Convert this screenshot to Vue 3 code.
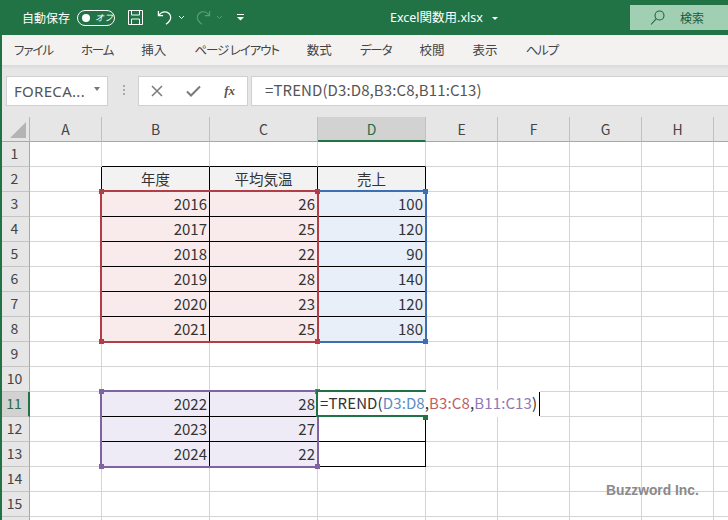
<script setup>
const tabs = ['ファイル', 'ホーム', '挿入', 'ページ レイアウト', '数式', 'データ', '校閲', '表示', 'ヘルプ']
const columns = ['A', 'B', 'C', 'D', 'E', 'F', 'G', 'H', 'I']
const rowNumbers = Array.from({ length: 16 }, (_, i) => i + 1)

const values = {
  2: ['年度', '平均気温', '売上'],
  3: [2016, 26, 100],
  4: [2017, 25, 120],
  5: [2018, 22, 90],
  6: [2019, 28, 140],
  7: [2020, 23, 120],
  8: [2021, 25, 180],
  11: [2022, 28, ''],
  12: [2023, 27, ''],
  13: [2024, 22, ''],
}

const inTable = (row) => (row >= 2 && row <= 8) || (row >= 11 && row <= 13)

const isKana = (tab) => /[ァ-ヶー]/.test(tab)

const cellText = (row, col) => {
  const line = values[row]
  return line && col >= 1 && col <= 3 ? line[col - 1] : ''
}

const cellClass = (row, col) => {
  const body = col >= 1 && col <= 3
  return {
    head: row === 2 && body,
    pink: row >= 3 && row <= 8 && col <= 2 && col >= 1,
    blue: row >= 3 && row <= 8 && col === 3,
    lilac: row >= 11 && row <= 13 && col <= 2 && col >= 1,
    'line-b': body && ((row >= 1 && row <= 8) || (row >= 10 && row <= 13)),
    'line-r': col <= 3 && inTable(row),
  }
}
</script>

<template>
  <div class="window">
    <header class="titlebar">
      <div class="quick">
        <span class="autosave">自動保存</span>
        <span class="toggle"><i class="knob"></i><em>オフ</em></span>
        <svg class="save" width="17" height="17" viewBox="0 0 17 17" fill="none" stroke="#fff" stroke-width="1">
          <path d="M1.500 1.500h14v14h-14z" />
          <path d="M4.500 1.500v4.500h8v-4.500M4.500 15.500v-5.500h8v5.500" />
        </svg>
        <svg class="undo" width="16" height="17" viewBox="0 0 17 17" fill="none" stroke="#fff" stroke-width="1.300">
          <path d="M1.500 1.500v5h5" />
          <path d="M1.800 6.300C4 3.200 7.300 1.800 10.500 2.800c3.800 1.300 5 5.500 3.300 8.500c-.8 1.500-2.200 3-4.300 4.500" />
        </svg>
        <svg class="caret" width="7" height="5" viewBox="0 0 7 5" fill="none" stroke="#fff" stroke-width="1"><path d="M1 1l2.500 2.500L6 1" /></svg>
        <svg class="redo" width="16" height="17" viewBox="0 0 17 17" fill="none" stroke="#5d9a78" stroke-width="1.200">
          <path d="M15.500 1.500v5h-5" />
          <path d="M15.200 6.300C13 3.200 9.700 1.800 6.500 2.800c-3.800 1.300-5 5.500-3.300 8.500c.8 1.500 2.200 3 4.300 4.500" />
        </svg>
        <svg class="caret dim" width="7" height="5" viewBox="0 0 7 5" fill="none" stroke="#5d9a78" stroke-width="1"><path d="M1 1l2.500 2.500L6 1" /></svg>
        <svg class="more" width="8" height="7" viewBox="0 0 8 7" fill="#fff"><path d="M0 0h7v1H0zM0 3h7L3.500 6.500z" /></svg>
      </div>
      <div class="doc">Excel関数用.xlsx<i class="doc-caret"></i></div>
      <div class="search">
        <svg width="15" height="16" viewBox="0 0 15 16" fill="none" stroke="#24643f" stroke-width="1.100">
          <circle cx="9.500" cy="5.500" r="4.500" />
          <path d="M6.200 8.800L1 14.500" />
        </svg>
        <span>検索</span>
      </div>
    </header>

    <nav class="tabs">
      <span v-for="tab in tabs" :key="tab" :class="{ kana: isKana(tab) }">{{ tab }}</span>
    </nav>

    <div class="formula-row">
      <div class="namebox">
        <span>FORECA...</span>
        <i class="name-caret"></i>
      </div>
      <div class="grip"></div>
      <div class="buttons">
        <svg width="12" height="12" viewBox="0 0 12 12" fill="none" stroke="#7a7a7a" stroke-width="1.500"><path d="M1 1l10 10M11 1L1 11" /></svg>
        <svg width="15" height="12" viewBox="0 0 15 12" fill="none" stroke="#7a7a7a" stroke-width="2"><path d="M1 6.500l4 4L14 1.500" /></svg>
        <span class="fx">fx</span>
      </div>
      <div class="formula">=TREND(D3:D8,B3:C8,B11:C13)</div>
    </div>

    <div class="sheet">
      <div class="grid">
        <div class="corner"><i></i></div>
        <div
          v-for="col in columns"
          :key="col"
          class="col-head"
          :class="{ selected: col === 'D' }"
        >{{ col }}</div>

        <template v-for="row in rowNumbers" :key="row">
          <div class="row-head" :class="{ selected: row === 11 }">{{ row }}</div>
          <div
            v-for="(col, c) in columns"
            :key="col"
            class="cell"
            :class="cellClass(row, c)"
          >{{ cellText(row, c) }}</div>
        </template>
      </div>

      <!-- formula references and the edited cell, same tracks as the grid underneath -->
      <div class="grid overlay">
        <div class="range red">
          <i class="dot tl"></i><i class="dot tr"></i><i class="dot bl"></i><i class="dot br"></i>
        </div>
        <div class="range blue-range">
          <i class="dot tr"></i><i class="dot br"></i>
        </div>
        <div class="range purple">
          <i class="dot tl"></i><i class="dot tr"></i><i class="dot bl"></i><i class="dot br"></i>
        </div>

        <div class="editor">
          <span>=TREND(</span><span class="c-blue">D3:D8</span><span>,</span><span class="c-red">B3:C8</span><span>,</span><span class="c-purple">B11:C13</span><span>)</span>
          <i class="fill"></i>
          <i class="cursor"></i>
        </div>
      </div>
    </div>

    <div class="mark">Buzzword Inc.</div>
  </div>
</template>

<style>
html, body {
  margin: 0;
  background: #fff;
  overflow: hidden;
}
</style>

<style scoped>
.window {
  position: relative;
  width: 728px;
  height: 520px;
  overflow: hidden;
  background: #fff;
  font-family: "Noto Sans CJK JP", "Noto Sans", sans-serif;
  color: #333;
}

.titlebar {
  height: 35px;
  background: #217346;
  color: #fff;
  display: flex;
  align-items: flex-start;
  font-size: 12px;
}
.quick {
  display: flex;
  align-items: center;
  height: 35px;
  padding-left: 22px;
  width: 368px;
  box-sizing: border-box;
}
.autosave {
  width: 55px;
  font-feature-settings: "palt";
}
.toggle {
  width: 38px;
  height: 16px;
  box-sizing: border-box;
  border: 1px solid #fff;
  border-radius: 8px;
  display: flex;
  align-items: center;
  padding-left: 4px;
}
.knob {
  width: 8px;
  height: 8px;
  border-radius: 50%;
  background: #fff;
}
.toggle em {
  font-style: italic;
  font-size: 9px;
  margin-left: 5px;
  line-height: 14px;
}
.save {
  margin-left: 12px;
}
.undo {
  margin-left: 13px;
}
.caret {
  margin-left: 5px;
}
.redo {
  margin-left: 10px;
}
.caret.dim {
  margin-left: 5px;
}
.more {
  margin-left: 14px;
}
.doc {
  margin-left: 22px;
  width: 208px;
  height: 35px;
  line-height: 35px;
  font-size: 12.5px;
  font-family: "Noto Sans", "Noto Sans CJK JP", sans-serif;
}
.doc-caret {
  display: inline-block;
  margin-left: 9px;
  vertical-align: 2px;
  border-left: 3px solid transparent;
  border-right: 3px solid transparent;
  border-top: 3px solid #fff;
}
.search {
  margin-left: 32px;
  margin-top: 5px;
  flex: 1;
  height: 25px;
  background: #a0cfb3;
  color: #24583c;
  display: flex;
  align-items: center;
  padding-left: 20px;
  gap: 15px;
}

.tabs {
  height: 30px;
  background: #f3f2f1;
  display: flex;
  align-items: center;
  gap: 28px;
  padding-left: 13px;
  font-size: 12.5px;
  font-feature-settings: "palt";
  color: #444;
  margin-left: 1px;
  padding-bottom: 1px;
  box-sizing: border-box;
}
.tabs .kana {
  letter-spacing: -1.100px;
}

.formula-row {
  height: 52px;
  box-sizing: border-box;
  background: linear-gradient(#d9d9d9, #e6e6e6 4px);
  display: flex;
  padding: 11px 0 11px 4px;
  margin-left: 2px;
  align-items: stretch;
}
.namebox {
  width: 102px;
  box-sizing: border-box;
  background: #fff;
  border: 1px solid #d0d0d0;
  display: flex;
  align-items: center;
  justify-content: space-between;
  padding: 0 7px;
  font-size: 15px;
  letter-spacing: .3px;
  font-family: "Noto Sans", sans-serif;
  color: #555;
}
.name-caret {
  border-left: 3.5px solid transparent;
  border-right: 3.5px solid transparent;
  border-top: 4px solid #777;
  margin-bottom: 4px;
}
.grip {
  width: 2px;
  margin: 9px 13px 9px 15px;
  background: repeating-linear-gradient(#aaa 0 2px, transparent 2px 4px);
}
.buttons {
  width: 110px;
  box-sizing: border-box;
  background: #fff;
  border: 1px solid #d0d0d0;
  display: flex;
  align-items: center;
  padding: 0 12px;
  justify-content: space-between;
}
.fx {
  font-family: "Liberation Serif", serif;
  font-style: italic;
  font-size: 13px;
  color: #555;
  font-weight: bold;
}
.formula {
  flex: 1;
  margin-left: 3px;
  background: #fff;
  border: 1px solid #d0d0d0;
  border-right: 0;
  padding-left: 13px;
  font-size: 15px;
  letter-spacing: .1px;
  line-height: 26px;
  color: #555;
}

.sheet {
  position: relative;
  margin-left: 2px;
  height: 403px;
}
.grid {
  display: grid;
  grid-template-columns: 28px 72px 108px 108px 108px 72px 72px 72px 72px 72px;
  grid-template-rows: repeat(17, 25px);
}
.overlay {
  position: absolute;
  inset: 0;
  pointer-events: none;
}
.corner {
  background: #e6e6e6;
  border-right: 1px solid #b5b5b5;
  border-bottom: 1px solid #a8a8a8;
  box-sizing: border-box;
  position: relative;
}
.corner i {
  position: absolute;
  right: 3px;
  bottom: 3px;
  border-left: 16px solid transparent;
  border-bottom: 16px solid #b4b4b4;
}
.col-head {
  background: #e6e6e6;
  border-right: 1px solid #c0c0c0;
  border-bottom: 1px solid #a8a8a8;
  box-sizing: border-box;
  text-align: center;
  font-size: 14px;
  line-height: 24px;
  color: #444;
}
.col-head.selected {
  background: #d2d2d2;
  border-bottom: 2px solid #217346;
  color: #2a6a4a;
}
.row-head {
  background: #e6e6e6;
  border-right: 1px solid #a8a8a8;
  border-bottom: 1px solid #c4c4c4;
  box-sizing: border-box;
  text-align: center;
  font-size: 14px;
  line-height: 23px;
  color: #444;
  padding-right: 2px;
}
.row-head.selected {
  background: #d2d2d2;
  border-right: 2px solid #217346;
  color: #2a6a4a;
}
.cell {
  border-right: 1px solid #d4d4d4;
  border-bottom: 1px solid #d4d4d4;
  box-sizing: border-box;
  text-align: right;
  font-size: 15px;
  line-height: 23px;
  padding-right: 2px;
  color: #333;
  overflow: hidden;
}
.cell.head {
  background: #f2f2f2;
  text-align: center;
  padding-right: 0;
  font-size: 14.5px;
}
.cell.pink {
  background: #f9ebeb;
}
.cell.blue {
  background: #e8eff9;
}
.cell.lilac {
  background: #efebf6;
}
.cell.line-b {
  border-bottom-color: #000;
}
.cell.line-r {
  border-right-color: #000;
}

.range {
  border: 2px solid;
  position: relative;
  box-sizing: border-box;
}
.red {
  grid-area: 4 / 3 / 10 / 5;
  border-color: #b33d46;
  margin: -2px -1px -1px -2px;
}
.blue-range {
  grid-area: 4 / 5 / 10 / 6;
  border-color: #3c6eb4;
  border-left: 0;
  margin: -2px -1px -1px 1px;
}
.purple {
  grid-area: 12 / 3 / 15 / 5;
  border-color: #8064a2;
  margin: -2px -1px -1px -2px;
}
.dot {
  position: absolute;
  width: 5px;
  height: 5px;
  background-color: currentColor;
}
.red .dot { color: #b33d46; }
.blue-range .dot { color: #3c6eb4; }
.purple .dot { color: #8064a2; }
.tl { left: -3px; top: -3px; }
.tr { right: -3px; top: -3px; }
.bl { left: -3px; bottom: -3px; }
.br { right: -3px; bottom: -3px; }

.editor {
  grid-area: 12 / 5 / 13 / 6;
  position: relative;
  justify-self: start;
  align-self: start;
  margin: -2px 0 0 -2px;
  height: 27px;
  width: 224px;
  box-sizing: border-box;
  background: #fff;
  border-left: 2px solid #217346;
  padding-left: 2px;
  white-space: nowrap;
  font-size: 15px;
  letter-spacing: .12px;
  line-height: 26px;
  color: #333;
}
.editor::before {
  content: "";
  position: absolute;
  left: -2px;
  top: 0;
  width: 110px;
  height: 100%;
  box-sizing: border-box;
  border-top: 2px solid #217346;
  border-bottom: 2px solid #217346;
}
.fill {
  position: absolute;
  left: 105px;
  top: 25px;
  width: 5px;
  height: 5px;
  background: #217346;
}
.cursor {
  position: absolute;
  right: 0;
  top: 2px;
  bottom: 1px;
  width: 1px;
  background: #000;
}
.c-blue { color: #5b8cc4; }
.c-red { color: #c0605f; }
.c-purple { color: #9277b5; }

.mark {
  position: absolute;
  left: 606px;
  top: 483px;
  font-family: "Liberation Sans", sans-serif;
  font-weight: bold;
  font-size: 13.8px;
  color: #8a8a8a;
}
.window::before {
  content: "";
  position: absolute;
  left: 0;
  top: 35px;
  bottom: 0;
  width: 2px;
  background: #217346;
}
</style>
